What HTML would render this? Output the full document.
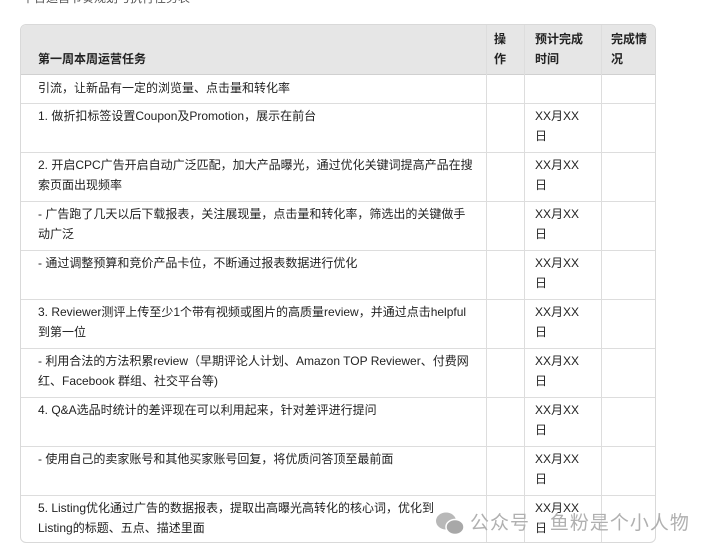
<!DOCTYPE html>
<html><head><meta charset="utf-8"><style>
body{margin:0;width:720px;height:551px;background:#fff;overflow:hidden;position:relative;font-family:"Liberation Sans","Noto Sans CJK SC",sans-serif;font-size:12px;color:#222;}
.t{position:absolute;left:20px;top:24px;width:636px;height:519px;border:1px solid #d9d9d9;border-radius:6px;box-sizing:border-box;overflow:hidden}
.hd{position:absolute;left:0;top:0;width:100%;height:49px;background:#e6e6e6;border-bottom:1px solid #d0d0d0}
.v{position:absolute;top:0;bottom:0;width:1px;background:#ddd}
.h{position:absolute;left:0;right:0;height:1px;background:#ddd}
.x{position:absolute;line-height:20px;white-space:nowrap}
.b{font-weight:bold;color:#222}
.wm{position:absolute;top:508px;font-size:19px;color:#b0b0b0;letter-spacing:1px}
</style></head><body>
<div class="x" style="left:22px;top:-12px;color:#555">平台运营节奏规划与执行任务表</div>
<div class="t">
<div class="hd"></div>
<div class="v" style="left:465px"></div><div class="v" style="left:503px"></div><div class="v" style="left:580px"></div>
<div class="h" style="top:78px"></div><div class="h" style="top:127px"></div><div class="h" style="top:176px"></div><div class="h" style="top:225px"></div><div class="h" style="top:274px"></div><div class="h" style="top:323px"></div><div class="h" style="top:372px"></div><div class="h" style="top:421px"></div><div class="h" style="top:470px"></div>
</div>
<div class="x b" style="left:38px;top:49px">第一周本周运营任务</div>
<div class="x b" style="left:494px;top:29px">操<br>作</div>
<div class="x b" style="left:535px;top:29px">预计完成<br>时间</div>
<div class="x b" style="left:611px;top:29px">完成情<br>况</div>
<div class="x" style="left:38px;top:78px">引流，让新品有一定的浏览量、点击量和转化率</div>
<div class="x" style="left:38px;top:106px">1. 做折扣标签设置Coupon及Promotion，展示在前台</div>
<div class="x" style="left:38px;top:155px">2. 开启CPC广告开启自动广泛匹配，加大产品曝光，通过优化关键词提高产品在搜<br>索页面出现频率</div>
<div class="x" style="left:38px;top:204px">- 广告跑了几天以后下载报表，关注展现量，点击量和转化率，筛选出的关键做手<br>动广泛</div>
<div class="x" style="left:38px;top:253px">- 通过调整预算和竞价产品卡位，不断通过报表数据进行优化</div>
<div class="x" style="left:38px;top:302px">3. Reviewer测评上传至少1个带有视频或图片的高质量review，并通过点击helpful<br>到第一位</div>
<div class="x" style="left:38px;top:351px">- 利用合法的方法积累review（早期评论人计划、Amazon TOP Reviewer、付费网<br>红、Facebook 群组、社交平台等)</div>
<div class="x" style="left:38px;top:400px">4. Q&amp;A选品时统计的差评现在可以利用起来，针对差评进行提问</div>
<div class="x" style="left:38px;top:449px">- 使用自己的卖家账号和其他买家账号回复，将优质问答顶至最前面</div>
<div class="x" style="left:38px;top:498px">5. Listing优化通过广告的数据报表，提取出高曝光高转化的核心词，优化到<br>Listing的标题、五点、描述里面</div>
<div class="x" style="left:535px;top:106px">XX月XX<br>日</div>
<div class="x" style="left:535px;top:155px">XX月XX<br>日</div>
<div class="x" style="left:535px;top:204px">XX月XX<br>日</div>
<div class="x" style="left:535px;top:253px">XX月XX<br>日</div>
<div class="x" style="left:535px;top:302px">XX月XX<br>日</div>
<div class="x" style="left:535px;top:351px">XX月XX<br>日</div>
<div class="x" style="left:535px;top:400px">XX月XX<br>日</div>
<div class="x" style="left:535px;top:449px">XX月XX<br>日</div>
<div class="x" style="left:535px;top:498px">XX月XX<br>日</div>
<svg style="position:absolute;left:435px;top:511px" width="30" height="26" viewBox="0 0 30 26"><ellipse cx="11" cy="10" rx="10" ry="8.5" fill="#b8b8b8"/><ellipse cx="20" cy="16" rx="9" ry="7.5" fill="#a8a8a8" stroke="#fff" stroke-width="1.5"/></svg>
<div class="wm" style="left:470px">公众号 · 鱼粉是个小人物</div>
</body></html>
